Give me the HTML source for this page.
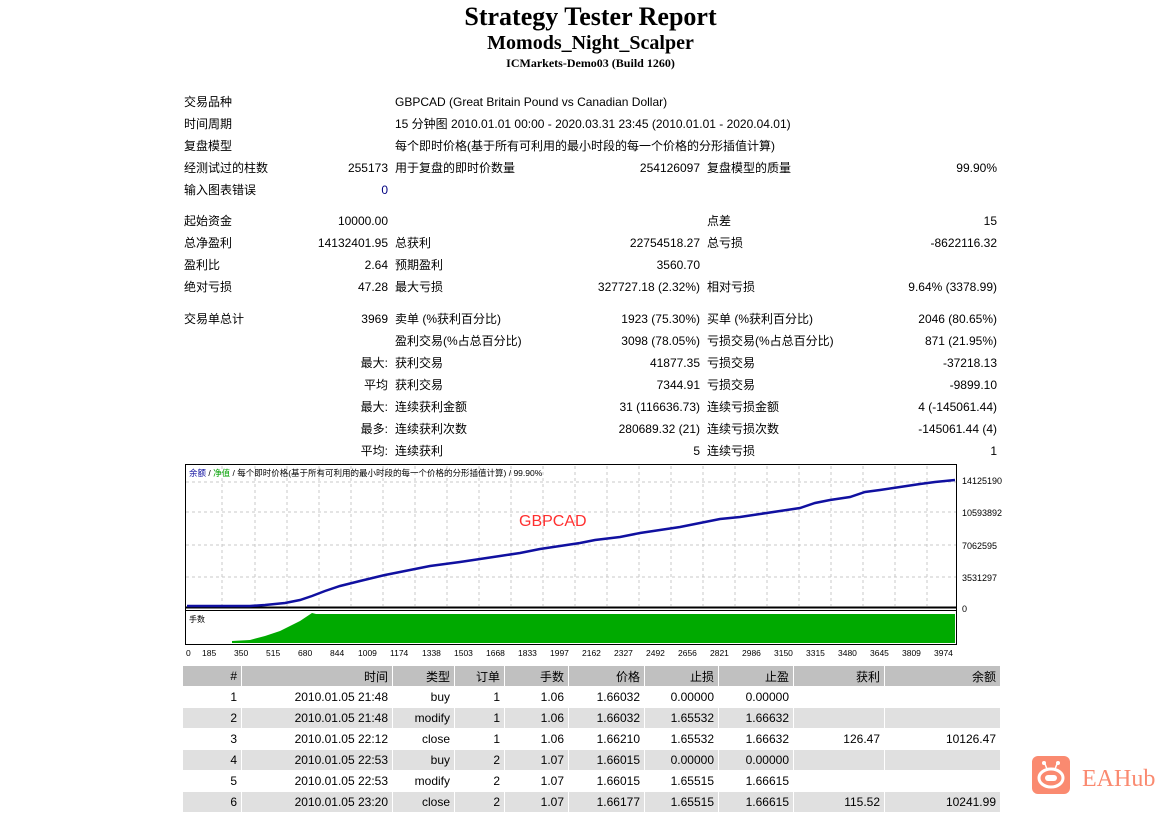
<!DOCTYPE html>
<html><head><meta charset="utf-8">
<style>
body{margin:0;background:#fff;width:1171px;height:802px;overflow:hidden;position:relative;font-family:"Liberation Sans","Noto Sans CJK SC",sans-serif;font-size:12px;color:#000}
.a{position:absolute;white-space:nowrap;line-height:18px}
.r{text-align:right}
h1,h2,h3{position:absolute;left:0;width:1181px;text-align:center;margin:0;font-family:"Liberation Serif",serif;font-weight:bold}
table{position:absolute;left:182px;top:665px;width:819px;table-layout:fixed;border-collapse:separate;border-spacing:1px;font-size:12px}
td{text-align:right;height:20px;padding:0 4px 0 0;white-space:nowrap;overflow:hidden}
tr.h td{background:#c0c0c0}
tr.g td{background:#e0e0e0}
</style></head><body>
<h1 style="top:2px;font-size:26px">Strategy Tester Report</h1>
<h2 style="top:32px;font-size:20px">Momods_Night_Scalper</h2>
<h3 style="top:56px;font-size:12px">ICMarkets-Demo03 (Build 1260)</h3>

<div class="a" style="left:184px;top:93px">交易品种</div><div class="a" style="left:395px;top:93px">GBPCAD (Great Britain Pound vs Canadian Dollar)</div>
<div class="a" style="left:184px;top:115px">时间周期</div><div class="a" style="left:395px;top:115px">15 分钟图 2010.01.01 00:00 - 2020.03.31 23:45 (2010.01.01 - 2020.04.01)</div>
<div class="a" style="left:184px;top:137px">复盘模型</div><div class="a" style="left:395px;top:137px">每个即时价格(基于所有可利用的最小时段的每一个价格的分形插值计算)</div>
<div class="a" style="left:184px;top:159px">经测试过的柱数</div><div class="a r" style="right:783px;top:159px">255173</div><div class="a" style="left:395px;top:159px">用于复盘的即时价数量</div><div class="a r" style="right:471px;top:159px">254126097</div><div class="a" style="left:707px;top:159px">复盘模型的质量</div><div class="a r" style="right:174px;top:159px">99.90%</div>
<div class="a" style="left:184px;top:181px">输入图表错误</div><div class="a r" style="right:783px;top:181px;color:#000080">0</div>

<div class="a" style="left:184px;top:212px">起始资金</div><div class="a r" style="right:783px;top:212px">10000.00</div><div class="a" style="left:707px;top:212px">点差</div><div class="a r" style="right:174px;top:212px">15</div>
<div class="a" style="left:184px;top:234px">总净盈利</div><div class="a r" style="right:783px;top:234px">14132401.95</div><div class="a" style="left:395px;top:234px">总获利</div><div class="a r" style="right:471px;top:234px">22754518.27</div><div class="a" style="left:707px;top:234px">总亏损</div><div class="a r" style="right:174px;top:234px">-8622116.32</div>
<div class="a" style="left:184px;top:256px">盈利比</div><div class="a r" style="right:783px;top:256px">2.64</div><div class="a" style="left:395px;top:256px">预期盈利</div><div class="a r" style="right:471px;top:256px">3560.70</div>
<div class="a" style="left:184px;top:278px">绝对亏损</div><div class="a r" style="right:783px;top:278px">47.28</div><div class="a" style="left:395px;top:278px">最大亏损</div><div class="a r" style="right:471px;top:278px">327727.18 (2.32%)</div><div class="a" style="left:707px;top:278px">相对亏损</div><div class="a r" style="right:174px;top:278px">9.64% (3378.99)</div>

<div class="a" style="left:184px;top:310px">交易单总计</div><div class="a r" style="right:783px;top:310px">3969</div><div class="a" style="left:395px;top:310px">卖单 (%获利百分比)</div><div class="a r" style="right:471px;top:310px">1923 (75.30%)</div><div class="a" style="left:707px;top:310px">买单 (%获利百分比)</div><div class="a r" style="right:174px;top:310px">2046 (80.65%)</div>
<div class="a" style="left:395px;top:332px">盈利交易(%占总百分比)</div><div class="a r" style="right:471px;top:332px">3098 (78.05%)</div><div class="a" style="left:707px;top:332px">亏损交易(%占总百分比)</div><div class="a r" style="right:174px;top:332px">871 (21.95%)</div>
<div class="a r" style="right:783px;top:354px">最大:</div><div class="a" style="left:395px;top:354px">获利交易</div><div class="a r" style="right:471px;top:354px">41877.35</div><div class="a" style="left:707px;top:354px">亏损交易</div><div class="a r" style="right:174px;top:354px">-37218.13</div>
<div class="a r" style="right:783px;top:376px">平均</div><div class="a" style="left:395px;top:376px">获利交易</div><div class="a r" style="right:471px;top:376px">7344.91</div><div class="a" style="left:707px;top:376px">亏损交易</div><div class="a r" style="right:174px;top:376px">-9899.10</div>
<div class="a r" style="right:783px;top:398px">最大:</div><div class="a" style="left:395px;top:398px">连续获利金额</div><div class="a r" style="right:471px;top:398px">31 (116636.73)</div><div class="a" style="left:707px;top:398px">连续亏损金额</div><div class="a r" style="right:174px;top:398px">4 (-145061.44)</div>
<div class="a r" style="right:783px;top:420px">最多:</div><div class="a" style="left:395px;top:420px">连续获利次数</div><div class="a r" style="right:471px;top:420px">280689.32 (21)</div><div class="a" style="left:707px;top:420px">连续亏损次数</div><div class="a r" style="right:174px;top:420px">-145061.44 (4)</div>
<div class="a r" style="right:783px;top:442px">平均:</div><div class="a" style="left:395px;top:442px">连续获利</div><div class="a r" style="right:471px;top:442px">5</div><div class="a" style="left:707px;top:442px">连续亏损</div><div class="a r" style="right:174px;top:442px">1</div>

<svg style="position:absolute;left:0;top:0" width="1171" height="802" font-family="Liberation Sans,Noto Sans CJK SC,sans-serif">
<rect x="185.5" y="464.5" width="771" height="180" fill="#fff" stroke="#000"/>
<g stroke="#c8c8c8" stroke-dasharray="3,3">
<line x1="186" x2="956" y1="482" y2="482"/><line x1="186" x2="956" y1="512" y2="512"/><line x1="186" x2="956" y1="545" y2="545"/><line x1="186" x2="956" y1="577" y2="577"/>
<line x1="222" x2="222" y1="466" y2="606"/><line x1="255" x2="255" y1="466" y2="606"/><line x1="287" x2="287" y1="466" y2="606"/><line x1="319" x2="319" y1="466" y2="606"/><line x1="351" x2="351" y1="466" y2="606"/><line x1="383" x2="383" y1="466" y2="606"/><line x1="415" x2="415" y1="466" y2="606"/><line x1="447" x2="447" y1="466" y2="606"/><line x1="479" x2="479" y1="466" y2="606"/><line x1="511" x2="511" y1="466" y2="606"/><line x1="543" x2="543" y1="466" y2="606"/><line x1="575" x2="575" y1="466" y2="606"/><line x1="607" x2="607" y1="466" y2="606"/><line x1="639" x2="639" y1="466" y2="606"/><line x1="671" x2="671" y1="466" y2="606"/><line x1="703" x2="703" y1="466" y2="606"/><line x1="735" x2="735" y1="466" y2="606"/><line x1="767" x2="767" y1="466" y2="606"/><line x1="799" x2="799" y1="466" y2="606"/><line x1="831" x2="831" y1="466" y2="606"/><line x1="863" x2="863" y1="466" y2="606"/><line x1="895" x2="895" y1="466" y2="606"/><line x1="927" x2="927" y1="466" y2="606"/>
</g>
<line x1="186" x2="956" y1="607.5" y2="607.5" stroke="#000" stroke-width="2"/>
<line x1="186" x2="956" y1="610.5" y2="610.5" stroke="#000"/>
<polyline fill="none" stroke="#1010a0" stroke-width="2.5" points="187,606 250,606 265,605 285,603 300,600 312,596 325,591 340,586 360,581 385,575 410,570 430,566 460,562 480,559 500,556 520,553 540,549 560,546 580,543 595,540 620,537 640,533 660,530 680,527 700,523 720,519 740,517 760,514 780,511 800,508 815,503 830,500 850,497 865,492 880,490 900,487 920,484 935,482 955,480"/>
<text x="519" y="526" fill="#ff3030" font-size="16">GBPCAD</text>
<text x="189" y="476" font-size="8.5" fill="#000"><tspan fill="#1010a0">余额</tspan> / <tspan fill="#00a000">净值</tspan> / 每个即时价格(基于所有可利用的最小时段的每一个价格的分形插值计算) / 99.90%</text>
<polygon fill="#00aa00" points="232,643 232,641 250,640 265,636 280,631 292,625 300,621 306,617 312,613 316,614 955,614 955,643"/>
<text x="189" y="622" font-size="8">手数</text>
<g font-size="9" fill="#000">
<text x="962" y="484">14125190</text><text x="962" y="516">10593892</text><text x="962" y="549">7062595</text><text x="962" y="581">3531297</text><text x="962" y="612">0</text>
<text y="656" font-size="8.5"><tspan x="186">0</tspan><tspan x="202">185</tspan><tspan x="234">350</tspan><tspan x="266">515</tspan><tspan x="298">680</tspan><tspan x="330">844</tspan><tspan x="358">1009</tspan><tspan x="390">1174</tspan><tspan x="422">1338</tspan><tspan x="454">1503</tspan><tspan x="486">1668</tspan><tspan x="518">1833</tspan><tspan x="550">1997</tspan><tspan x="582">2162</tspan><tspan x="614">2327</tspan><tspan x="646">2492</tspan><tspan x="678">2656</tspan><tspan x="710">2821</tspan><tspan x="742">2986</tspan><tspan x="774">3150</tspan><tspan x="806">3315</tspan><tspan x="838">3480</tspan><tspan x="870">3645</tspan><tspan x="902">3809</tspan><tspan x="934">3974</tspan></text>
</g>
<g transform="translate(1032,756)">
<rect width="38" height="38" rx="6" fill="#fa8a70"/>
<circle cx="12" cy="7" r="2" fill="#fff"/><circle cx="26" cy="7" r="2" fill="#fff"/>
<line x1="13" y1="8" x2="15" y2="13" stroke="#fff" stroke-width="1.5"/><line x1="25" y1="8" x2="23" y2="13" stroke="#fff" stroke-width="1.5"/>
<ellipse cx="19" cy="22" rx="12" ry="9" fill="none" stroke="#fff" stroke-width="3"/>
<rect x="13" y="19" width="12" height="6" rx="3" fill="#fff"/>
</g>
<text x="1082" y="786" font-family="Liberation Serif,serif" font-size="24" fill="#fa8a70">EAHub</text>
</svg>

<table>
<colgroup><col style="width:58px"><col style="width:150px"><col style="width:61px"><col style="width:49px"><col style="width:63px"><col style="width:75px"><col style="width:73px"><col style="width:74px"><col style="width:90px"><col style="width:115px"></colgroup>
<tr class="h"><td>#</td><td>时间</td><td>类型</td><td>订单</td><td>手数</td><td>价格</td><td>止损</td><td>止盈</td><td>获利</td><td>余额</td></tr>
<tr><td>1</td><td>2010.01.05 21:48</td><td>buy</td><td>1</td><td>1.06</td><td>1.66032</td><td>0.00000</td><td>0.00000</td><td></td><td></td></tr>
<tr class="g"><td>2</td><td>2010.01.05 21:48</td><td>modify</td><td>1</td><td>1.06</td><td>1.66032</td><td>1.65532</td><td>1.66632</td><td></td><td></td></tr>
<tr><td>3</td><td>2010.01.05 22:12</td><td>close</td><td>1</td><td>1.06</td><td>1.66210</td><td>1.65532</td><td>1.66632</td><td>126.47</td><td>10126.47</td></tr>
<tr class="g"><td>4</td><td>2010.01.05 22:53</td><td>buy</td><td>2</td><td>1.07</td><td>1.66015</td><td>0.00000</td><td>0.00000</td><td></td><td></td></tr>
<tr><td>5</td><td>2010.01.05 22:53</td><td>modify</td><td>2</td><td>1.07</td><td>1.66015</td><td>1.65515</td><td>1.66615</td><td></td><td></td></tr>
<tr class="g"><td>6</td><td>2010.01.05 23:20</td><td>close</td><td>2</td><td>1.07</td><td>1.66177</td><td>1.65515</td><td>1.66615</td><td>115.52</td><td>10241.99</td></tr>
</table>
</body></html>
